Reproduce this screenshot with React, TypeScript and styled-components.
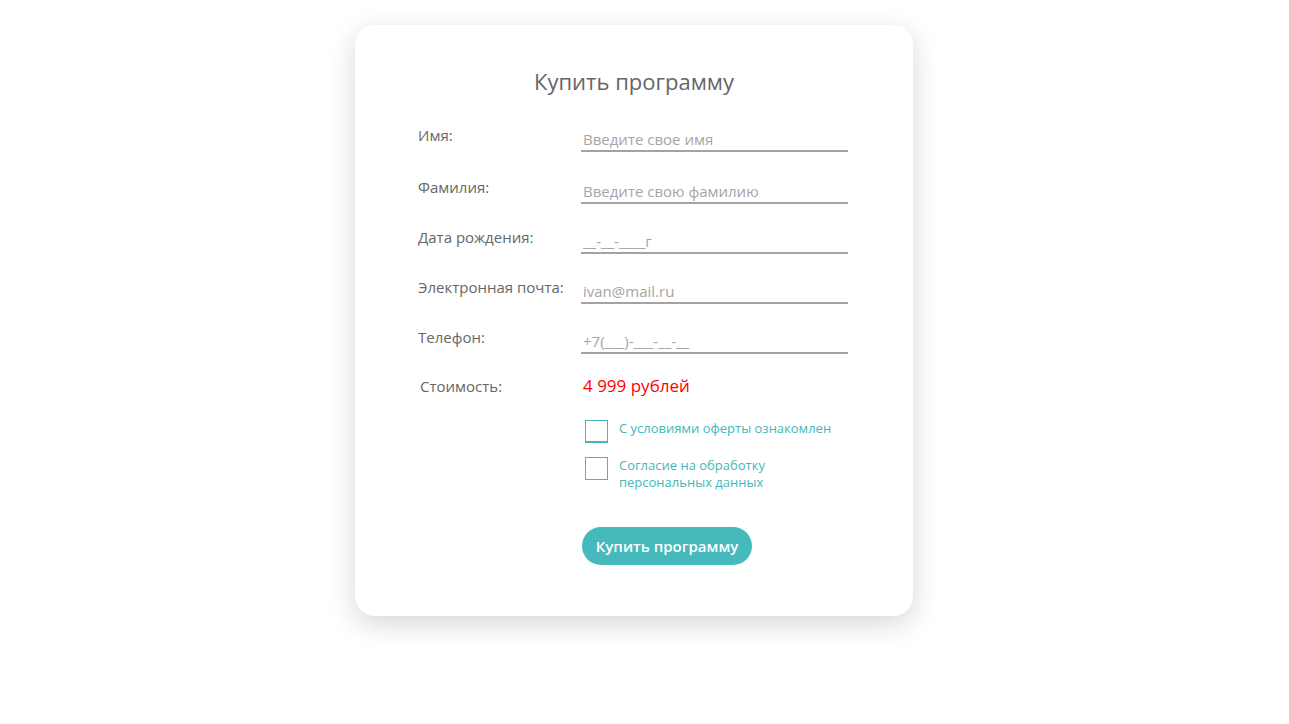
import React from "react";
import styled, { createGlobalStyle } from "styled-components";

const Global = createGlobalStyle`
  html, body { margin: 0; padding: 0; background: #fff; }
  body { font-family: "Open Sans", "Noto Sans", sans-serif; }
  * { box-sizing: border-box; }
`;

const Page = styled.div`
  display: flex;
  justify-content: center;
  padding: 25px 21px 40px 0;
`;

const Card = styled.form`
  width: 558px;
  background: #fff;
  border-radius: 20px;
  box-shadow: 0 8px 28px rgba(0, 0, 0, 0.16);
  padding: 43px 0 51px 63px;
  display: flex;
  flex-direction: column;
`;

const Title = styled.h2`
  margin: 0 0 32px -63px;
  font-weight: 400;
  font-size: 22px;
  line-height: 26px;
  color: #666;
  text-align: center;
`;

const Fields = styled.div`
  display: flex;
  flex-direction: column;
  gap: 24px;
`;

const Row = styled.label<{ $extra?: number }>`
  display: grid;
  grid-template-columns: 163px 267px;
  align-items: start;
  margin-bottom: ${(p) => p.$extra ?? 0}px;
`;

const Label = styled.span<{ $shift?: number }>`
  font-size: 15px;
  line-height: 18px;
  color: #666;
  padding-left: ${(p) => p.$shift ?? 0}px;
`;

const Input = styled.input`
  width: 100%;
  border: none;
  border-bottom: 2px solid #a3a3a3;
  padding: 2px 2px 0;
  height: 26px;
  font-family: inherit;
  font-size: 15px;
  line-height: 18px;
  color: #666;
  outline: none;
  background: transparent;
  &::placeholder { color: #a5a5a5; }
`;

const Price = styled.span`
  font-size: 17px;
  line-height: 20px;
  color: #ff0000;
  padding-left: 2px;
`;

const PriceRow = styled(Row)`
  align-items: center;
  margin-top: -2px;
`;

const Checks = styled.div`
  display: flex;
  flex-direction: column;
  gap: 14px;
  margin: 24px 0 0 167px;
`;

const Check = styled.label`
  display: flex;
  align-items: flex-start;
  gap: 11px;
  cursor: pointer;
`;

const Box = styled.span<{ $focus?: boolean }>`
  flex: none;
  width: 23px;
  height: 23px;
  border: 1px solid #4ab6b9;
  border-bottom-width: ${(p) => (p.$focus ? 2 : 1)}px;
  background: #fff;
`;

const CheckText = styled.span`
  font-size: 13px;
  line-height: 17px;
  color: #45b7ba;
  width: 240px;
`;

const Button = styled.button`
  align-self: flex-start;
  margin: 36px 0 0 164px;
  width: 170px;
  height: 38px;
  border: none;
  border-radius: 19px;
  background: #45b9bb;
  color: #fff;
  font-family: inherit;
  font-size: 15px;
  font-weight: 600;
  cursor: pointer;
`;

const fields = [
  { label: "Имя:", ph: "Введите свое имя", extra: 2 },
  { label: "Фамилия:", ph: "Введите свою фамилию" },
  { label: "Дата рождения:", ph: "__-__-____г" },
  { label: "Электронная почта:", ph: "ivan@mail.ru" },
  { label: "Телефон:", ph: "+7(___)-___-__-__" },
];

export default function App() {
  return (
    <>
      <Global />
      <Page>
        <Card onSubmit={(e) => e.preventDefault()}>
          <Title>Купить программу</Title>
          <Fields>
            {fields.map((f) => (
              <Row key={f.label} $extra={f.extra}>
                <Label>{f.label}</Label>
                <Input placeholder={f.ph} />
              </Row>
            ))}
            <PriceRow as="div">
              <Label $shift={2}>Стоимость:</Label>
              <Price>4 999 рублей</Price>
            </PriceRow>
          </Fields>
          <Checks>
            <Check>
              <Box $focus />
              <CheckText>С условиями оферты ознакомлен</CheckText>
            </Check>
            <Check>
              <Box />
              <CheckText>
                Согласие на обработку
                <br />
                персональных данных
              </CheckText>
            </Check>
          </Checks>
          <Button type="submit">Купить программу</Button>
        </Card>
      </Page>
    </>
  );
}
